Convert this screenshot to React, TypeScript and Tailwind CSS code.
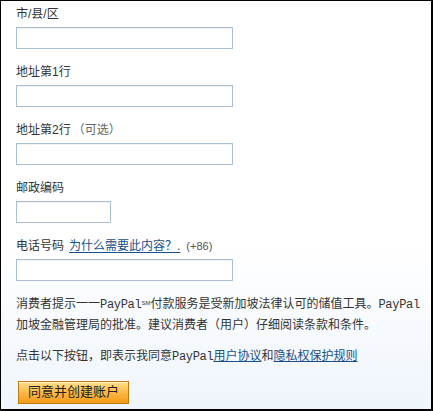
import React from "react";

const cjk = { fontFamily: '"Liberation Sans", "Noto Sans CJK SC", sans-serif' };

function PP() {
  return <span className="font-['Liberation_Mono',monospace] text-[12px] tracking-[-0.3px]">PayPal</span>;
}

function Field({ label, extra, width = "w-[217px]" }: { label: React.ReactNode; extra?: React.ReactNode; width?: string }) {
  return (
    <div className="flex flex-col gap-[4px]">
      <div className="h-[18px] leading-[18px] text-[12px] text-[#333]">
        {label}
        {extra}
      </div>
      <div className={`${width} h-[22px] border border-[#a9bfd8] bg-white shadow-[inset_0_1px_1px_rgba(0,0,0,0.06)]`} />
    </div>
  );
}

export default function App() {
  return (
    <div
      style={cjk}
      className="w-[433px] h-[411px] box-border border-t border-l border-r-2 border-b-2 border-black bg-gradient-to-b from-white from-60% to-[#eff5fc] pl-[15px] pt-[4px] text-[#333]"
    >
      <div className="flex flex-col gap-[14px]">
        <Field label="市/县/区" />
        <Field label="地址第1行" />
        <Field label="地址第2行" extra={<span className="text-[#666] text-[12px] ml-[2px]">（可选）</span>} />
        <Field label="邮政编码" width="w-[95px]" />
        <Field
          label="电话号码"
          extra={
            <>
              <span className="ml-[5px] text-[#1a4f8b] underline underline-offset-2">为什么需要此内容？.</span>
              <span className="ml-[6px] text-[11px] text-[#555]">(+86)</span>
            </>
          }
        />
      </div>
      <p className="mt-[13px] text-[12px] leading-[20px] text-[#333] pr-[4px]">
        消费者提示一一<PP />
        <sup className="text-[6px]">SM</sup>付款服务是受新加坡法律认可的储值工具。<PP />
        <br />
        加坡金融管理局的批准。建议消费者（用户）仔细阅读条款和条件。
      </p>
      <p className="mt-[11px] text-[12px] leading-[20px] text-[#333]">
        点击以下按钮，即表示我同意<PP />
        <span className="text-[#1a4f8b] underline">用户协议</span>和
        <span className="text-[#1a4f8b] underline">隐私权保护规则</span>
      </p>
      <div className="mt-[12px] ml-[2px]">
        <button className="h-[23px] px-[9px] border border-[#c07a10] bg-gradient-to-b from-[#ffdf8a] via-[#fdb845] to-[#f29b14] text-[13px] leading-[20px] text-[#222] shadow-[inset_0_1px_0_rgba(255,255,255,0.6)]">
          同意并创建账户
        </button>
      </div>
    </div>
  );
}
